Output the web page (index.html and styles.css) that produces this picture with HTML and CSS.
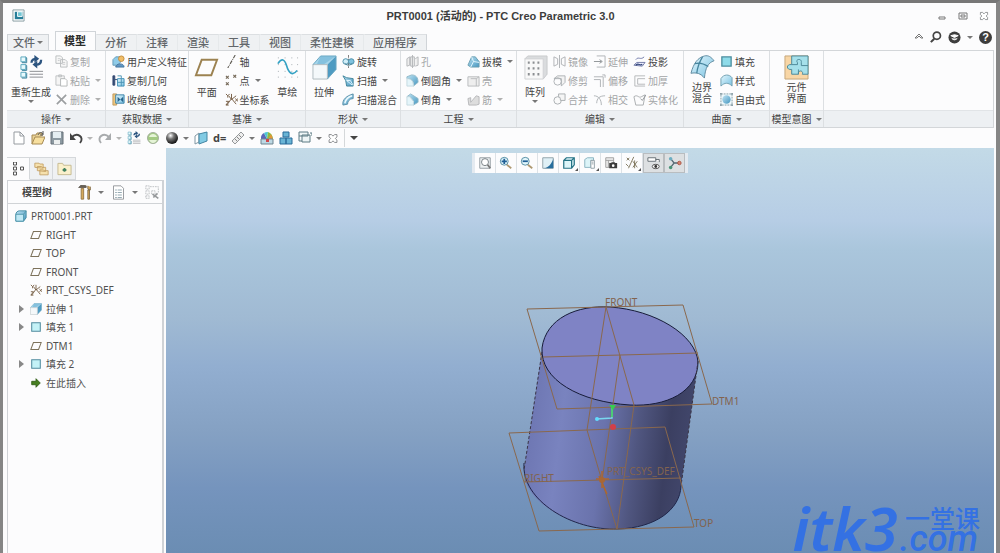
FILE: index.html
```html
<!DOCTYPE html>
<html lang="zh-CN">
<head>
<meta charset="utf-8">
<title>PRT0001 (活动的) - PTC Creo Parametric 3.0</title>
<link rel="stylesheet" href="styles.css">
</head>
<body>
<svg class="defs" width="0" height="0" aria-hidden="true">
<defs>
<linearGradient id="gb" x1="0" y1="0" x2="1" y2="1"><stop offset="0" stop-color="#e4f7fd"/><stop offset="1" stop-color="#79c2e2"/></linearGradient>
<linearGradient id="gd" x1="0" y1="0" x2="1" y2="1"><stop offset="0" stop-color="#bfe4f4"/><stop offset="1" stop-color="#4596bf"/></linearGradient>
<radialGradient id="ball" cx=".38" cy=".3" r=".7"><stop offset="0" stop-color="#fff"/><stop offset=".4" stop-color="#777"/><stop offset="1" stop-color="#111"/></radialGradient>
<symbol id="copy" viewBox="0 0 14 14"><path d="M1 1h5l2 2v6H1zM6 5h5l2 2v6H6z" fill="#f8f8f8" stroke="#b9bcbe"/><path d="M8 8h3M8 10h3M3 4h3M3 6h2" stroke="#c8cacc"/></symbol>
<symbol id="paste" viewBox="0 0 14 14"><path d="M1 2h9v10H1zM4 1h3v2H4z" fill="#f5f5f5" stroke="#bcbfc1"/><path d="M6 5h5l2 2v6H6z" fill="#fff" stroke="#b2b5b7"/></symbol>
<symbol id="del" viewBox="0 0 14 14"><path d="M2 2l10 10M12 2L2 12" stroke="#9c9fa1" stroke-width="1.8"/></symbol>
<symbol id="regen" viewBox="0 0 26 26"><path d="M2 2h5v5H2zM2 10h5v5H2zM2 18h5v5H2z" fill="#e8fafd" stroke="#5ba7bd"/><path d="M7 2l1 1v5H3M7 10l1 1v5H3M7 18l1 1v5H3" fill="none" stroke="#367f99"/><path d="M11 17h14M11 20h14M11 23h14" stroke="#8a8d91"/><path d="M13 8c0-3 2-4 5-4M23 5c0 4-2 5-5 5" stroke="#2d5580" stroke-width="2.4" fill="none"/><path d="M16 0l5 4-5 4zM19 6l-5 4 5 4z" fill="#2d5580"/></symbol>
<symbol id="udf" viewBox="0 0 14 14"><path d="M1 5l3-3h5v6l-3 3H1z" fill="#8fcbe8" stroke="#6399b5"/><circle cx="10" cy="4" r="3" fill="#f0bd68" stroke="#c28d3b"/><path d="M4 13c0-4 9-5 9 0z" fill="#5f96c4" stroke="#44759e"/></symbol>
<symbol id="cgeo" viewBox="0 0 14 14"><path d="M1 2h2v10H1zM3 6h4" fill="#344a72" stroke="#344a72"/><path d="M6 5h7v8H6z" fill="url(#gb)" stroke="#3d8eb5"/><path d="M6 2h4v3M10 5v8M6 9h7" fill="none" stroke="#4c93b4"/></symbol>
<symbol id="shrink" viewBox="0 0 14 14"><path d="M1 1h4v12H1z" fill="#edc47c" stroke="#c0995c"/><path d="M4 2h9v9H4z" fill="url(#gb)" stroke="#357ea5"/><path d="M6 4v6l3-3zM12 4v6L9 7z" fill="#28638c"/></symbol>
<symbol id="plane" viewBox="0 0 26 20"><path d="M8 2h16l-6 16H2z" fill="none" stroke="#9c8251" stroke-width="2"/></symbol>
<symbol id="splane" viewBox="0 0 14 12"><path d="M4 2h9l-3 8H1z" fill="none" stroke="#7d725b" stroke-width="1.2"/></symbol>
<symbol id="axis" viewBox="0 0 14 14"><path d="M11 0L3 14" stroke="#5e5a52" stroke-width="1.2" stroke-dasharray="4 1 1 1"/></symbol>
<symbol id="pts" viewBox="0 0 14 14"><path d="M1 2l3 3M4 2L1 5M9 1l3 3M12 1L9 4M1 9l3 3M4 9l-3 3" stroke="#746857" stroke-width="1.2"/></symbol>
<symbol id="csys" viewBox="0 0 14 14"><path d="M7 1v5L2 13M7 6l5 6M4 3l3 4 5-4M1 1l2 2 2-2M3 3v2M1 9h3l-3 4h3M11 6l3 3M14 6l-3 3" fill="none" stroke="#70563c"/></symbol>
<symbol id="sketch" viewBox="0 0 26 26"><path d="M3 3h1M10 3h1M17 3h1M23 3h1M3 10h1M10 10h1M17 10h1M23 10h1M3 17h1M10 17h1M17 17h1M23 17h1M3 23h1M10 23h1M17 23h1M23 23h1" stroke="#a4abb0"/><path d="M3 9C7 3 10 4 12 11s6 12 11 5" fill="none" stroke="#35a2c4" stroke-width="1.7"/></symbol>
<symbol id="extrude" viewBox="0 0 26 26"><path d="M9 1h16L16 10H1z" fill="#a5d5ea"/><path d="M16 10l9-9v14l-9 10z" fill="#4e9bc2"/><path d="M9 1h16L12 10H5z" fill="#70b4d5" opacity=".6"/><path d="M1 10h15v15H1z" fill="#f4f8fa" stroke="#aeb9be"/><path d="M1 10l8-9h16v14l-9 10" fill="none" stroke="#6ba8c3"/></symbol>
<symbol id="revolve" viewBox="0 0 14 14"><path d="M7 0v14" stroke="#777" stroke-dasharray="3 1"/><ellipse cx="4" cy="7" rx="3" ry="3" fill="#d1eef8" stroke="#488da7"/><ellipse cx="10" cy="7" rx="3" ry="3" fill="#7fc2de" stroke="#488da7"/><path d="M3 9c3 3 6 2 8 0" fill="none" stroke="#34728a"/></symbol>
<symbol id="sweep" viewBox="0 0 14 14"><path d="M1 2l4 2 7 1v8H5L4 7z" fill="url(#gd)" stroke="#3c8298"/><path d="M5 7l6 5M5 7h4l3 5" fill="none" stroke="#e4f7ff"/></symbol>
<symbol id="blend" viewBox="0 0 14 14"><path d="M1 13c-1-6 4-10 11-12v5C8 6 6 9 6 12z" fill="url(#gd)" stroke="#568ea8"/><path d="M3 11c1-4 4-7 8-8" fill="none" stroke="#edfbff" stroke-width="1.5"/></symbol>
<symbol id="hole" viewBox="0 0 14 14"><path d="M1 4l3-2v9l-3 1zM10 4l3-2v9l-3 1M5 2h4v10H5zM7 0v14" fill="#eee" stroke="#b3b6b9"/></symbol>
<symbol id="round" viewBox="0 0 14 14"><path d="M1 3l5-2c5 0 7 3 7 8l-5 4c1-5-2-8-7-8z" fill="url(#gd)" stroke="#91b8c8"/><path d="M1 5c5 0 7 3 7 8H1z" fill="#e5f5fa" stroke="#c3d8e0"/></symbol>
<symbol id="chamfer" viewBox="0 0 14 14"><path d="M1 4l4-3 8 5v4l-5 3V9L4 4z" fill="url(#gd)" stroke="#91b8c8"/><path d="M1 4h3l4 5v4H1z" fill="#e5f5fa" stroke="#c3d8e0"/></symbol>
<symbol id="draft" viewBox="0 0 14 14"><path d="M1 11L5 2h4l4 5v6H4z" fill="url(#gd)" stroke="#6a9eb1"/><path d="M5 2l2 5-3 6M7 7l6 1" fill="none" stroke="#e5f8ff"/></symbol>
<symbol id="shell" viewBox="0 0 14 14"><path d="M1 3h12v10H1zM4 5h6v8M10 5l3-2" fill="#eee" stroke="#b8babc"/></symbol>
<symbol id="rib" viewBox="0 0 14 14"><path d="M1 6l3-1v5l6-7 3 1v8l-3 1H2z" fill="#ddd" stroke="#b5b7b9"/></symbol>
<symbol id="pattern" viewBox="0 0 26 26"><path d="M2 4l3-3h20v19l-4 5z" fill="#dadcde" stroke="#c8cacc"/><path d="M2 4h19v21H2z" fill="#f8f8f8" stroke="#cfd1d3"/><path d="M5 8h2M10 8h2M15 8h2M5 14h2M10 14h2M15 14h2M5 20h2M10 20h2M15 20h2" stroke="#8b8e91" stroke-width="2.4"/></symbol>
<symbol id="mirror" viewBox="0 0 14 14"><path d="M1 2l4 2v6l-4 2zM13 2L9 4v6l4 2zM7 0v14" fill="none" stroke="#aeb1b4"/></symbol>
<symbol id="trim" viewBox="0 0 14 14"><path d="M1 5l4-3h8v7l-4 4V5H1z" fill="#f3f3f3" stroke="#adb1b4"/><circle cx="5" cy="8" r="4" fill="none" stroke="#adb1b4"/></symbol>
<symbol id="merge" viewBox="0 0 14 14"><circle cx="5" cy="8" r="4" fill="#fafafa" stroke="#a9adb0"/><path d="M6 1h7v7H8c0-3-1-4-2-4z" fill="#f5f5f5" stroke="#a9adb0"/></symbol>
<symbol id="extend" viewBox="0 0 14 14"><path d="M4 1h9v12H4" fill="none" stroke="#adb1b4"/><path d="M1 7h8M7 5l3 2-3 2" stroke="#8d9194" fill="none"/></symbol>
<symbol id="offset" viewBox="0 0 14 14"><path d="M1 3h10v11M1 6h7v8M10 1h3v3" fill="none" stroke="#adb1b4"/></symbol>
<symbol id="isect" viewBox="0 0 14 14"><path d="M1 3c5 0 8 4 8 10M4 11c0-5 3-8 9-8" fill="none" stroke="#adb1b4"/></symbol>
<symbol id="project" viewBox="0 0 14 14"><path d="M3 5c3-4 5 1 9-3M1 11l3-3h9l-3 4z" fill="#eef" stroke="#6f78a4"/><path d="M3 11c3-3 4 1 7-1" fill="none" stroke="#33497d" stroke-width="1.3"/></symbol>
<symbol id="thick" viewBox="0 0 14 14"><path d="M13 2H2v11h11M13 5H5v6h8" fill="none" stroke="#b3b6b8"/></symbol>
<symbol id="solid" viewBox="0 0 14 14"><path d="M1 4c4-3 5 2 8 0l4-2-2 11H3z" fill="none" stroke="#a8abad"/><path d="M8 6l2 2 4-6" fill="none" stroke="#919599"/></symbol>
<symbol id="boundary" viewBox="0 0 26 26"><path d="M1 19C4 8 8 3 15 1c4-1 7 1 10 5-6 2-9 7-10 18-4-5-8-6-14-5z" fill="url(#gb)" stroke="#618ba0"/><path d="M5 9c6-2 11 1 14 3M13 2c-3 5-5 9-6 17" fill="none" stroke="#47859e" stroke-width="1.3"/></symbol>
<symbol id="fill" viewBox="0 0 14 14"><path d="M2 2h10v10H2z" fill="#8edbe9" stroke="#4c8d9e" stroke-width="1.4"/></symbol>
<symbol id="tfill" viewBox="0 0 14 14"><path d="M2 2h10v10H2z" fill="#c4f2f7" stroke="#518b9e" stroke-width="1.2"/></symbol>
<symbol id="style" viewBox="0 0 14 14"><path d="M1 13V5c3-5 9-5 12-1v9c-4-4-8-4-12 0z" fill="url(#gb)" stroke="#6f9eaf"/></symbol>
<symbol id="free" viewBox="0 0 14 14"><path d="M1 1h12v12H1z" fill="#eef8fb" stroke="#839ba4" stroke-dasharray="2 1"/><circle cx="7" cy="7" r="4.500" fill="url(#gd)"/><path d="M0 0h2v2H0zM12 0h2v2h-2zM0 12h2v2H0zM12 12h2v2h-2z" fill="#8fa3aa"/></symbol>
<symbol id="puzzle" viewBox="0 0 26 26"><path d="M1 1h24v24H1z" fill="#f8d6a6" stroke="#c4a57a"/><path d="M8 1h17v19h-6c2-4-5-5-4 0H8v-5c-6 1-6-6 0-5z" fill="#a5e0ea" stroke="#4d8898"/><path d="M8 10h6v-2c-3-4 5-5 4 0v3h7M15 20v-5" fill="none" stroke="#4d8898"/></symbol>
<symbol id="new" viewBox="0 0 14 14"><path d="M2 1h6l4 4v8H2zM8 1v4h4" fill="#fff" stroke="#969ba0"/></symbol>
<symbol id="open" viewBox="0 0 14 14"><path d="M1 13V4h4l1-2h5v3" fill="#ead295" stroke="#a68a54"/><path d="M1 13l3-7h10l-3 7z" fill="#f7df9e" stroke="#a68a54"/><path d="M7 4c1-3 4-3 5-1M12 0v4H9" fill="none" stroke="#555"/></symbol>
<symbol id="save" viewBox="0 0 14 14"><path d="M1 1h12v12H1z" fill="#8c99a1" stroke="#667078"/><path d="M3 1h8v6H3z" fill="#e4edf1"/><path d="M4 9h6v4H4z" fill="#ecefef"/></symbol>
<symbol id="undo" viewBox="0 0 14 14"><path d="M3 6c5-5 13 0 8 6" fill="none" stroke="#444" stroke-width="1.9"/><path d="M1 2v7h6z" fill="#444"/></symbol>
<symbol id="redo" viewBox="0 0 14 14"><path d="M11 6C6 1-2 6 3 12" fill="none" stroke="#a8abad" stroke-width="1.9"/><path d="M13 2v7H7z" fill="#a8abad"/></symbol>
<symbol id="globe" viewBox="0 0 14 14"><circle cx="7" cy="7" r="5.500" fill="#a3cb83" stroke="#a5b09e"/><path d="M3 6c1-4 7-4 8 0zM3 9h8c-2 4-6 4-8 0z" fill="#e6f4d8"/></symbol>
<symbol id="sphere" viewBox="0 0 14 14"><circle cx="7" cy="7" r="6" fill="url(#ball)"/></symbol>
<symbol id="box" viewBox="0 0 14 14"><path d="M1 5c0-2 2-4 4-4h8v8l-3 4H1z" fill="url(#gd)" stroke="#3b879f"/><path d="M1 5h9v8H1z" fill="#bfe8f5" stroke="#4b94aa"/><path d="M10 5l3-4" stroke="#4b94aa"/></symbol>
<symbol id="bookbox" viewBox="0 0 14 14"><path d="M1 5l4-3v9l-4 2z" fill="#fff" stroke="#8298a4"/><path d="M5 3l8-2v9l-8 3z" fill="#82cbe4" stroke="#4486a3"/></symbol>
<symbol id="ruler" viewBox="0 0 14 14"><path d="M1 10L10 1l3 3-9 9z" fill="#eee" stroke="#96999b"/><path d="M4 8l2 2M6 6l2 2M8 4l2 2" stroke="#888"/></symbol>
<symbol id="rainbow" viewBox="0 0 14 14"><path d="M1 8a6 6 0 0 1 3-6l3 6z" fill="#5966b8"/><path d="M4 2a6 6 0 0 1 4-1L7 8z" fill="#4dc5d6"/><path d="M8 1c3 1 5 4 5 7H7z" fill="#8abb43"/><path d="M13 8H8l3-5z" fill="#e49537"/><path d="M1 8h12v5H1z" fill="#bcd8e4" stroke="#6e8591"/><path d="M6 8h3v3H6z" fill="#ce484b"/></symbol>
<symbol id="boxes" viewBox="0 0 14 14"><path d="M4 1h6v5H4zM1 7h6v6H1zM7 7h6v6H7z" fill="#69b4d5" stroke="#286b99"/></symbol>
<symbol id="windows" viewBox="0 0 14 14"><path d="M1 1h9v4H1zM4 4h8v7H4zM1 5v5h3M12 2h2v3" fill="#eef5f6" stroke="#5c7a84"/></symbol>
<symbol id="close" viewBox="0 0 14 14"><path d="M2 2h3l2 2 2-2h3v3l-2 2 2 2v3H9l-2-2-2 2H2V9l2-2-2-2z" fill="#fff" stroke="#707377"/></symbol>
<symbol id="mtree" viewBox="0 0 14 14"><path d="M2 0h3v3H2zM2 5h3v3H2zM9 5h3v3H9zM2 10h3v3H2z" fill="none" stroke="#555"/></symbol>
<symbol id="folders" viewBox="0 0 18 16"><path d="M1 6V1h5l1 1h4v5zM4 10V5h5l1 1h4v5zM7 15V9h4l1 1h5v5z" fill="#f6e1ad" stroke="#c29e62"/></symbol>
<symbol id="folder" viewBox="0 0 16 14"><path d="M1 13V1h5l1 2h8v10z" fill="#faf0cc" stroke="#c5ba90"/><path d="M8 6v4M6 8h4" stroke="#438260" stroke-width="2"/></symbol>
<symbol id="tools" viewBox="0 0 16 18"><path d="M1 3h9V1L4 0z" fill="#665f56" stroke="#5e584f"/><path d="M4 4h3v13H4z" fill="#d5aa5c" stroke="#8e6e3e"/><path d="M12 1v4l3 1v-4M12 6h2v11h-2z" fill="#d9ac5d" stroke="#77613d"/></symbol>
<symbol id="list" viewBox="0 0 14 18"><path d="M1 1h9l3 3v13H1z" fill="#fff" stroke="#888c90"/><path d="M3 6h2M3 9h2M3 12h2M3 15h2M6 6h5M6 9h5M6 12h5M6 15h5" stroke="#8199a4"/></symbol>
<symbol id="filter" viewBox="0 0 18 18"><path d="M1 1h4v4H1zM1 7h4v4H1zM1 13h4v3H1zM8 7h4v4H8zM6 2h10v7" fill="none" stroke="#b5b8bb" stroke-dasharray="2 1"/><path d="M9 11l7 5M10 15l5-5" stroke="#96999b" stroke-width="2"/></symbol>
<symbol id="insert" viewBox="0 0 14 14"><path d="M2 5h5V2l5 5-5 5V9H2z" fill="#477f21" stroke="#315e17"/></symbol>
<symbol id="zfit" viewBox="0 0 16 16"><path d="M2 2h12v12H2z" fill="#eef1f2" stroke="#8d969b"/><circle cx="8" cy="7" r="4" fill="#fff" stroke="#6d767b"/><path d="M11 10l3 4" stroke="#777" stroke-width="2"/></symbol>
<symbol id="zin" viewBox="0 0 16 16"><circle cx="6" cy="6" r="4.500" fill="#e1f6fc" stroke="#4a859b"/><path d="M3 6h6M6 3v6" stroke="#205f96" stroke-width="2"/><path d="M9 10l5 4" stroke="#ae9870" stroke-width="2"/></symbol>
<symbol id="zout" viewBox="0 0 16 16"><circle cx="6" cy="6" r="4.500" fill="#e1f6fc" stroke="#4a859b"/><path d="M3 6h6" stroke="#205f96" stroke-width="2"/><path d="M9 10l5 4" stroke="#ae9870" stroke-width="2"/></symbol>
<symbol id="repaint" viewBox="0 0 16 16"><path d="M2 2h12v12H2z" fill="#dff0f6" stroke="#899ba2"/><path d="M14 3v11H3c6-1 9-5 11-11z" fill="#276e9d"/></symbol>
<symbol id="cube" viewBox="0 0 16 16"><path d="M2 5l3-3h9v8l-3 4H2zM2 5h9v9M11 5l3-3" fill="#dcf5f9" stroke="#247284" stroke-width="1.4"/></symbol>
<symbol id="views" viewBox="0 0 16 16"><path d="M2 4l3-2h7v3H9v8H2z" fill="#dcf4f8" stroke="#82aebd"/><path d="M9 5h4v9H9zM10 7h2M10 9h2" fill="#fff" stroke="#8d9aa1"/></symbol>
<symbol id="camera" viewBox="0 0 16 16"><path d="M2 2h9v11H2zM2 5h9M5 5v8" fill="#eee" stroke="#999"/><path d="M6 8h2l1-1h3l1 1h2v6H6z" fill="#3b3b3b"/><circle cx="10.500" cy="11" r="1.500" fill="#fff"/></symbol>
<symbol id="datum" viewBox="0 0 16 16"><path d="M2 2l3 3M5 2L2 5M10 1L4 14M9 6l5 7M14 6l-5 7M11 5v9M1 9l3 3" stroke="#776e53"/></symbol>
<symbol id="annot" viewBox="0 0 16 16"><path d="M1 2h9v4H1zM10 4h4v3" fill="#fff" stroke="#5c656a"/><ellipse cx="10" cy="12" rx="4" ry="2.500" fill="#fff" stroke="#444"/><circle cx="10" cy="12" r="1.600" fill="#333"/></symbol>
<symbol id="spin" viewBox="0 0 16 16"><path d="M3 3l4 5-4 5M7 8h6" fill="none" stroke="#556872" stroke-width="1.500"/><circle cx="3" cy="3" r="2" fill="#6cadc1"/><circle cx="3" cy="13" r="2" fill="#499276"/><circle cx="13" cy="8" r="2" fill="#d48571" stroke="#ac5242"/></symbol>
<symbol id="find" viewBox="0 0 14 14"><circle cx="8" cy="5.500" r="4.200" fill="none" stroke="#444" stroke-width="2"/><path d="M5 9l-4 4" stroke="#444" stroke-width="2.400"/></symbol>
<symbol id="learn" viewBox="0 0 14 14"><circle cx="7" cy="7" r="6.500" fill="#3d3d3d"/><path d="M3 5l4-1 4 1-4 2zM4 8c2 2 4 2 6 0" fill="#fff" stroke="#fff"/></symbol>
</defs>
</svg>
<div class="window">
<header class="titlebar">
<svg class="app" viewBox="0 0 14 14"><path d="M1 1h12v12H1z" fill="#fff" stroke="#84999f"/><path d="M3 3h9v8H3z" fill="#267d98"/><path d="M6 3h5v5H6z" fill="#70c5d4" stroke="#fff"/></svg>
<h1>PRT0001 (活动的) - PTC Creo Parametric 3.0</h1>
<div class="winbtns">
<button aria-label="最小化"><svg viewBox="0 0 10 10"><path d="M2 6h6v2H2z" fill="#fff" stroke="#777"/></svg></button>
<button aria-label="最大化"><svg viewBox="0 0 10 10"><path d="M1 2h8v6H1zM3 4h4v2H3z" fill="none" stroke="#777"/></svg></button>
<button aria-label="关闭"><svg viewBox="0 0 14 14"><use href="#close"/></svg></button>
</div>
</header>
<nav class="tabs">
<button class="tab file">文件<i class="arr"></i></button><button class="tab active">模型</button><button class="tab">分析</button><button class="tab">注释</button><button class="tab">渲染</button><button class="tab">工具</button><button class="tab">视图</button><button class="tab">柔性建模</button><button class="tab last">应用程序</button>
<div class="helpers">
<button aria-label="折叠功能区"><svg viewBox="0 0 10 10"><path d="M1 6l4-4 4 4H7L5 4 3 6z" fill="#fff" stroke="#777"/></svg></button>
<button aria-label="搜索"><svg class="i12"><use href="#find"/></svg></button>
<button aria-label="学习"><svg class="i13"><use href="#learn"/></svg><i class="arr"></i></button>
<button class="help" aria-label="帮助">?</button>
</div>
</nav>
<section class="ribbon">
<div class="group g1"><div class="tools">
<button class="big"><svg><use href="#regen"/></svg><span>重新生成</span><i class="arr"></i></button>
<div class="col"><button class="off"><svg><use href="#copy"/></svg>复制</button><button class="off"><svg><use href="#paste"/></svg>粘贴<i class="arr"></i></button><button class="off"><svg><use href="#del"/></svg>删除<i class="arr"></i></button></div>
</div><button class="label">操作<i class="arr"></i></button></div>
<div class="group g2"><div class="tools">
<div class="col"><button><svg><use href="#udf"/></svg>用户定义特征</button><button><svg><use href="#cgeo"/></svg>复制几何</button><button><svg><use href="#shrink"/></svg>收缩包络</button></div>
</div><button class="label">获取数据<i class="arr"></i></button></div>
<div class="group g3"><div class="tools">
<button class="big"><svg><use href="#plane"/></svg><span>平面</span></button>
<div class="col"><button><svg><use href="#axis"/></svg>轴</button><button><svg><use href="#pts"/></svg>点<i class="arr"></i></button><button><svg><use href="#csys"/></svg>坐标系</button></div>
<button class="big"><svg><use href="#sketch"/></svg><span>草绘</span></button>
</div><button class="label">基准<i class="arr"></i></button></div>
<div class="group g4"><div class="tools">
<button class="big"><svg><use href="#extrude"/></svg><span>拉伸</span></button>
<div class="col"><button><svg><use href="#revolve"/></svg>旋转</button><button><svg><use href="#sweep"/></svg>扫描<i class="arr"></i></button><button><svg><use href="#blend"/></svg>扫描混合</button></div>
</div><button class="label">形状<i class="arr"></i></button></div>
<div class="group g5"><div class="tools">
<div class="col"><button class="off"><svg><use href="#hole"/></svg>孔</button><button><svg><use href="#round"/></svg>倒圆角<i class="arr"></i></button><button><svg><use href="#chamfer"/></svg>倒角<i class="arr"></i></button></div>
<div class="col"><button><svg><use href="#draft"/></svg>拔模<i class="arr"></i></button><button class="off"><svg><use href="#shell"/></svg>壳</button><button class="off"><svg><use href="#rib"/></svg>筋<i class="arr"></i></button></div>
</div><button class="label">工程<i class="arr"></i></button></div>
<div class="group g6"><div class="tools">
<button class="big"><svg><use href="#pattern"/></svg><span>阵列</span><i class="arr"></i></button>
<div class="col"><button class="off"><svg><use href="#mirror"/></svg>镜像</button><button class="off"><svg><use href="#trim"/></svg>修剪</button><button class="off"><svg><use href="#merge"/></svg>合并</button></div>
<div class="col"><button class="off"><svg><use href="#extend"/></svg>延伸</button><button class="off"><svg><use href="#offset"/></svg>偏移</button><button class="off"><svg><use href="#isect"/></svg>相交</button></div>
<div class="col"><button><svg><use href="#project"/></svg>投影</button><button class="off"><svg><use href="#thick"/></svg>加厚</button><button class="off"><svg><use href="#solid"/></svg>实体化</button></div>
</div><button class="label">编辑<i class="arr"></i></button></div>
<div class="group g7"><div class="tools">
<button class="big two"><svg><use href="#boundary"/></svg><span>边界</span><span>混合</span></button>
<div class="col"><button><svg><use href="#fill"/></svg>填充</button><button><svg><use href="#style"/></svg>样式</button><button><svg><use href="#free"/></svg>自由式</button></div>
</div><button class="label">曲面<i class="arr"></i></button></div>
<div class="group g8"><div class="tools">
<button class="big two"><svg><use href="#puzzle"/></svg><span>元件</span><span>界面</span></button>
</div><button class="label">模型意图<i class="arr"></i></button></div>
<div class="group rest"><div class="tools"></div><div class="label"></div></div>
</section>
<div class="quick">
<button aria-label="新建"><svg><use href="#new"/></svg></button>
<button aria-label="打开"><svg><use href="#open"/></svg></button>
<button aria-label="保存"><svg><use href="#save"/></svg></button>
<button aria-label="撤消"><svg><use href="#undo"/></svg><i class="arr pale"></i></button>
<button aria-label="重做"><svg><use href="#redo"/></svg><i class="arr pale"></i></button>
<button aria-label="重新生成"><svg><use href="#regen"/></svg></button>
<button aria-label="在线"><svg><use href="#globe"/></svg></button>
<button aria-label="外观"><svg><use href="#sphere"/></svg><i class="arr"></i></button>
<button aria-label="截面"><svg><use href="#bookbox"/></svg></button>
<button class="dim">d=</button>
<button aria-label="测量"><svg><use href="#ruler"/></svg><i class="arr"></i></button>
<button aria-label="颜色"><svg><use href="#rainbow"/></svg></button>
<button aria-label="组件"><svg><use href="#boxes"/></svg></button>
<button aria-label="窗口"><svg><use href="#windows"/></svg><i class="arr"></i></button>
<button class="shut" aria-label="关闭窗口"><svg><use href="#close"/></svg></button>
<button class="more" aria-label="更多"><i class="arr dark"></i></button>
</div>
<main class="work">
<aside class="side">
<div class="sidetabs"><button class="on" aria-label="模型树"><svg><use href="#mtree"/></svg></button><button aria-label="文件夹"><svg><use href="#folders"/></svg></button><button aria-label="收藏夹"><svg><use href="#folder"/></svg></button></div>
<div class="panel">
<div class="panelhead"><h2>模型树</h2><button aria-label="设置"><svg><use href="#tools"/></svg><i class="arr"></i></button><button aria-label="显示"><svg><use href="#list"/></svg><i class="arr"></i></button><button aria-label="过滤"><svg><use href="#filter"/></svg></button></div>
<ul class="tree">
<li class="root"><svg><use href="#box"/></svg>PRT0001.PRT</li>
<li><svg><use href="#splane"/></svg>RIGHT</li>
<li><svg><use href="#splane"/></svg>TOP</li>
<li><svg><use href="#splane"/></svg>FRONT</li>
<li><svg><use href="#csys"/></svg>PRT_CSYS_DEF</li>
<li class="node"><svg><use href="#extrude"/></svg>拉伸 1</li>
<li class="node"><svg><use href="#tfill"/></svg>填充 1</li>
<li><svg><use href="#splane"/></svg>DTM1</li>
<li class="node"><svg><use href="#tfill"/></svg>填充 2</li>
<li><svg><use href="#insert"/></svg>在此插入</li>
</ul>
</div>
</aside>
<section class="view">
<div class="viewbar">
<button aria-label="重新调整"><svg><use href="#zfit"/></svg></button><button aria-label="放大"><svg><use href="#zin"/></svg></button><button aria-label="缩小"><svg><use href="#zout"/></svg></button><button aria-label="重画"><svg><use href="#repaint"/></svg></button><button class="drop" aria-label="显示样式"><svg><use href="#cube"/></svg></button><button class="drop" aria-label="已保存方向"><svg><use href="#views"/></svg></button><button aria-label="视图管理器"><svg><use href="#camera"/></svg></button><button class="drop" aria-label="基准显示"><svg><use href="#datum"/></svg></button><button class="on" aria-label="注释显示"><svg><use href="#annot"/></svg></button><button class="on" aria-label="旋转中心"><svg><use href="#spin"/></svg></button>
</div>
<svg class="scene" viewBox="500 290 260 250" role="img" aria-label="圆柱模型">
<defs><linearGradient id="side" gradientUnits="userSpaceOnUse" x1="530" y1="440" x2="690" y2="460"><stop offset="0" stop-color="#6f78b4"/><stop offset=".18" stop-color="#7983bf"/><stop offset=".45" stop-color="#6a73ac"/><stop offset=".66" stop-color="#505680"/><stop offset=".85" stop-color="#3b3f61"/><stop offset="1" stop-color="#42476c"/></linearGradient></defs>
<path d="M542 350L524 470C522 500 570 530 618 529C655 528 680 510 681 486L698 361Z" fill="url(#side)"/>
<path d="M542 348C546 318 577 305 610 307C655 310 696 335 698 362C698 392 666 407 630 405C580 402 540 380 542 348Z" fill="#7f83c5" stroke="#171c39"/>
<path d="M524 463C521 500 572 531 618 529C655 528 680 510 681 486" fill="none" stroke="#20264a"/>
<path d="M542 352L524 470M698 361L681 486" fill="none" stroke="#3a3546" stroke-dasharray="3 2"/>
<g fill="none" stroke="#8a684d"><path d="M527 309L683 305L712 404L557 409ZM543 357L698 353M606 307L634 405L617 529L602 481L587 430L606 307M620 355L602 481M509 433L665 427L694 527L539 531ZM524 482L681 478"/></g>
<path d="M612 406v12l-16 1" fill="none" stroke="#79d6ee" stroke-width="1.4"/><path d="M612 417v-11" stroke="#3fd35a" stroke-width="1.5"/><path d="M609 405h7l-3 5z" fill="#37ce50"/><circle cx="597" cy="419" r="2" fill="#62dcff"/><circle cx="613" cy="427" r="3" fill="#d33f48"/>
<path d="M596 479h13M602 471v17M599 476l8 18" stroke="#ae6730" stroke-width="1.5"/><circle cx="602" cy="480" r="3" fill="#a86736"/>
<g class="tags"><text x="605" y="306">FRONT</text><text x="712" y="405">DTM1</text><text x="694" y="527">TOP</text><text x="524" y="482">RIGHT</text><text x="607" y="475">PRT_CSYS_DEF</text></g>
</svg>
<div class="brand"><span class="itk">itk3</span><span class="rightmark"><span class="cn">一堂课</span><span class="com">.com</span></span></div>
</section>
</main>
</div>
</body>
</html>
```
FILE: styles.css
```css
* { box-sizing: border-box; }
body { margin: 0; background: #fcfcfd; color: #444; font: 10px/12px "Noto Sans", "Noto Sans CJK SC", sans-serif; }
.defs { position: absolute; }
button { display: flex; align-items: center; padding: 0; margin: 0; border: 0; background: none; color: inherit; font: inherit; white-space: nowrap; }
svg { display: block; flex: none; overflow: visible; }
h1, h2 { margin: 0; }
.window { display: flex; flex-direction: column; height: 100vh; overflow: hidden; border: solid #858585; border-width: 3px 4px 0 3px; border-top-color: #777; padding: 0 2px 0 4px; }
.arr { flex: none; border: solid transparent; border-width: 3px 3px 0; border-top-color: #777; }
.arr.pale { border-top-color: #b5b5b5; }
.arr.dark { border-width: 4px 4px 0; border-top-color: #444; }
.titlebar { display: grid; grid-template-columns: 1fr auto 1fr; align-items: center; height: 25px; padding: 0 5px; }
.app { width: 13px; height: 13px; }
.titlebar h1 { font: bold 11px/14px "Liberation Sans", "Noto Sans CJK SC", sans-serif; color: #3c3c3c; }
.winbtns { display: flex; justify-content: flex-end; gap: 11px; }
.winbtns svg { width: 10px; height: 10px; }
.tabs { display: flex; align-items: flex-end; height: 22px; font-size: 11px; color: #62666a; }
.tab { height: 16px; padding: 0 9px 0 8px; border: 1px solid #dcdfe2; border-left-color: transparent; border-right-color: #e6e9eb; border-bottom: 0; background: #eff1f3; font-weight: 500; }
.tab.last { border-right-color: #d0d4d8; }
.tab.file { gap: 2px; padding: 0 5px; margin-right: 6px; border-color: #d0d4d8; }
.tab.active { height: 19px; border-color: #d0d4d8; background: #fcfcfd; color: #2c2c2c; font-weight: bold; }
.helpers { display: flex; align-items: center; gap: 6px; height: 22px; margin-left: auto; padding: 0 2px 4px 0; }
.helpers button { gap: 6px; }
.helpers svg { width: 10px; height: 10px; }
.helpers .i12 { width: 12px; height: 12px; }
.helpers .i13 { width: 13px; height: 13px; }
.helpers .help { justify-content: center; width: 13px; height: 13px; border-radius: 50%; background: #3d3d3d; color: #fff; font: bold 11px/13px "Liberation Sans", sans-serif; }
.ribbon { display: flex; height: 78px; border: 1px solid #d3d6d9; border-left: 0; }
.group { display: flex; flex-direction: column; flex: none; border-right: 1px solid #dcdfe2; }
.tools { display: flex; flex: 1; padding-top: 1px; }
.label { display: flex; align-items: center; justify-content: center; gap: 4px; height: 17px; border-top: 1px solid #e1e4e7; background: #edf0f3; }
.g1 { width: 99px; } .g2 { width: 83px; } .g3 { width: 117px; } .g4 { width: 95px; }
.g5 { width: 116px; } .g6 { width: 167px; } .g7 { width: 86px; } .g8 { width: 54px; }
.rest { flex: 1; border-right: 0; }
.big { flex-direction: column; justify-content: flex-start; width: 36px; padding-top: 3px; }
.big svg { width: 25px; height: 25px; }
.big span { margin-top: 6px; }
.big .arr { margin-top: 2px; }
.big.two span { line-height: 11px; margin-top: 0; }
.big.two svg { margin-bottom: 2px; }
.g1 .big { width: 48px; }
.g8 .big { width: 53px; }
.col { display: flex; flex-direction: column; }
.col button { gap: 2px; height: 19px; }
.col svg { width: 13px; height: 13px; }
.col .arr { margin-left: 3px; }
.off { color: #a3a5a7; }
.off .arr { border-top-color: #b0b0b0; }
.g2 .tools { padding-left: 6px; }
.g5 .tools { padding-left: 5px; gap: 5px; }
.g6 .tools { gap: 5px; }
.g6 .big { margin-right: -5px; }
.quick { display: flex; align-items: center; gap: 5px; height: 20px; padding-left: 5px; }
.quick button { gap: 4px; }
.quick svg { width: 14px; height: 14px; }
.quick .dim { font-weight: bold; font-size: 11px; }
.quick .shut svg { width: 12px; height: 11px; }
.quick .more { height: 18px; padding-left: 5px; border-left: 1px solid #d5d8da; }
.work { display: flex; flex: 1; min-height: 0; }
.side { display: flex; flex-direction: column; width: 159px; padding: 9px 2px 0 0; }
.sidetabs { display: flex; }
.sidetabs button { justify-content: center; width: 23px; height: 23px; border: 1px solid #d5d8db; border-left: 0; background: #eff1f3; }
.sidetabs .on { border-bottom-color: #fcfcfd; background: #fcfcfd; }
.sidetabs svg { width: 15px; height: 14px; }
.panel { flex: 1; border: solid #cfd2d6; border-width: 1px 2px 0 1px; }
.panelhead { display: flex; align-items: center; gap: 7px; height: 23px; padding: 0 2px 0 14px; border-bottom: 1px solid #d0d3d6; }
.panelhead h2 { margin-right: auto; font-size: 10px; line-height: 12px; }
.panelhead button { gap: 6px; }
.panelhead svg { width: 15px; height: 15px; }
.tree { display: flex; flex-direction: column; justify-content: space-between; height: 188px; margin: 0; padding: 3px 0 0 7px; list-style: none; }
.tree li { position: relative; display: flex; align-items: center; height: 18px; padding-left: 15px; gap: 4px; color: #505050; }
.tree .root { padding-left: 0; }
.tree svg { width: 12px; height: 12px; }
.tree .node::before { content: ""; position: absolute; left: 4px; border: solid transparent; border-width: 4px 0 4px 5px; border-left-color: #888; }
.view { position: relative; flex: 1; overflow: hidden; background: linear-gradient(#c3dae7, #b6cde5 18%, #aac6dc 25%, #a0bad3 42%, #92aed0 54%, #85a1c3 70%, #7594bd 84%, #6b8db3); }
.viewbar { display: flex; width: max-content; margin: 5px auto 0; padding: 0 3px; background: #e4eaf0; }
.viewbar button { position: relative; justify-content: center; width: 21px; height: 20px; border-right: 1px solid #dde2e6; background: #fcfcfd; }
.viewbar .on { background: #dde0e2; border: 1px solid #b9bdc0; }
.viewbar svg { width: 14px; height: 14px; }
.viewbar .drop::after { content: ""; position: absolute; right: 1px; bottom: 2px; border: solid transparent; border-width: 0 0 3px 3px; border-bottom-color: #555; }
.scene { position: absolute; left: 334px; top: 142px; width: 260px; height: 250px; }
.tags { fill: #82634f; font-size: 10px; }
.brand { position: absolute; right: 14px; bottom: -6px; display: flex; align-items: flex-end; color: #3471e3; }
.itk { font-size: 60px; line-height: 62px; font-style: italic; font-weight: 600; }
.rightmark { display: flex; flex-direction: column; align-items: flex-end; padding: 0 0 3px 2px; }
.cn { margin-bottom: -8px; font-size: 25px; line-height: 24px; font-weight: 500; }
.com { padding-right: 2px; font-family: Roboto, sans-serif; font-size: 36px; line-height: 34px; font-style: italic; font-weight: 500; }
```
